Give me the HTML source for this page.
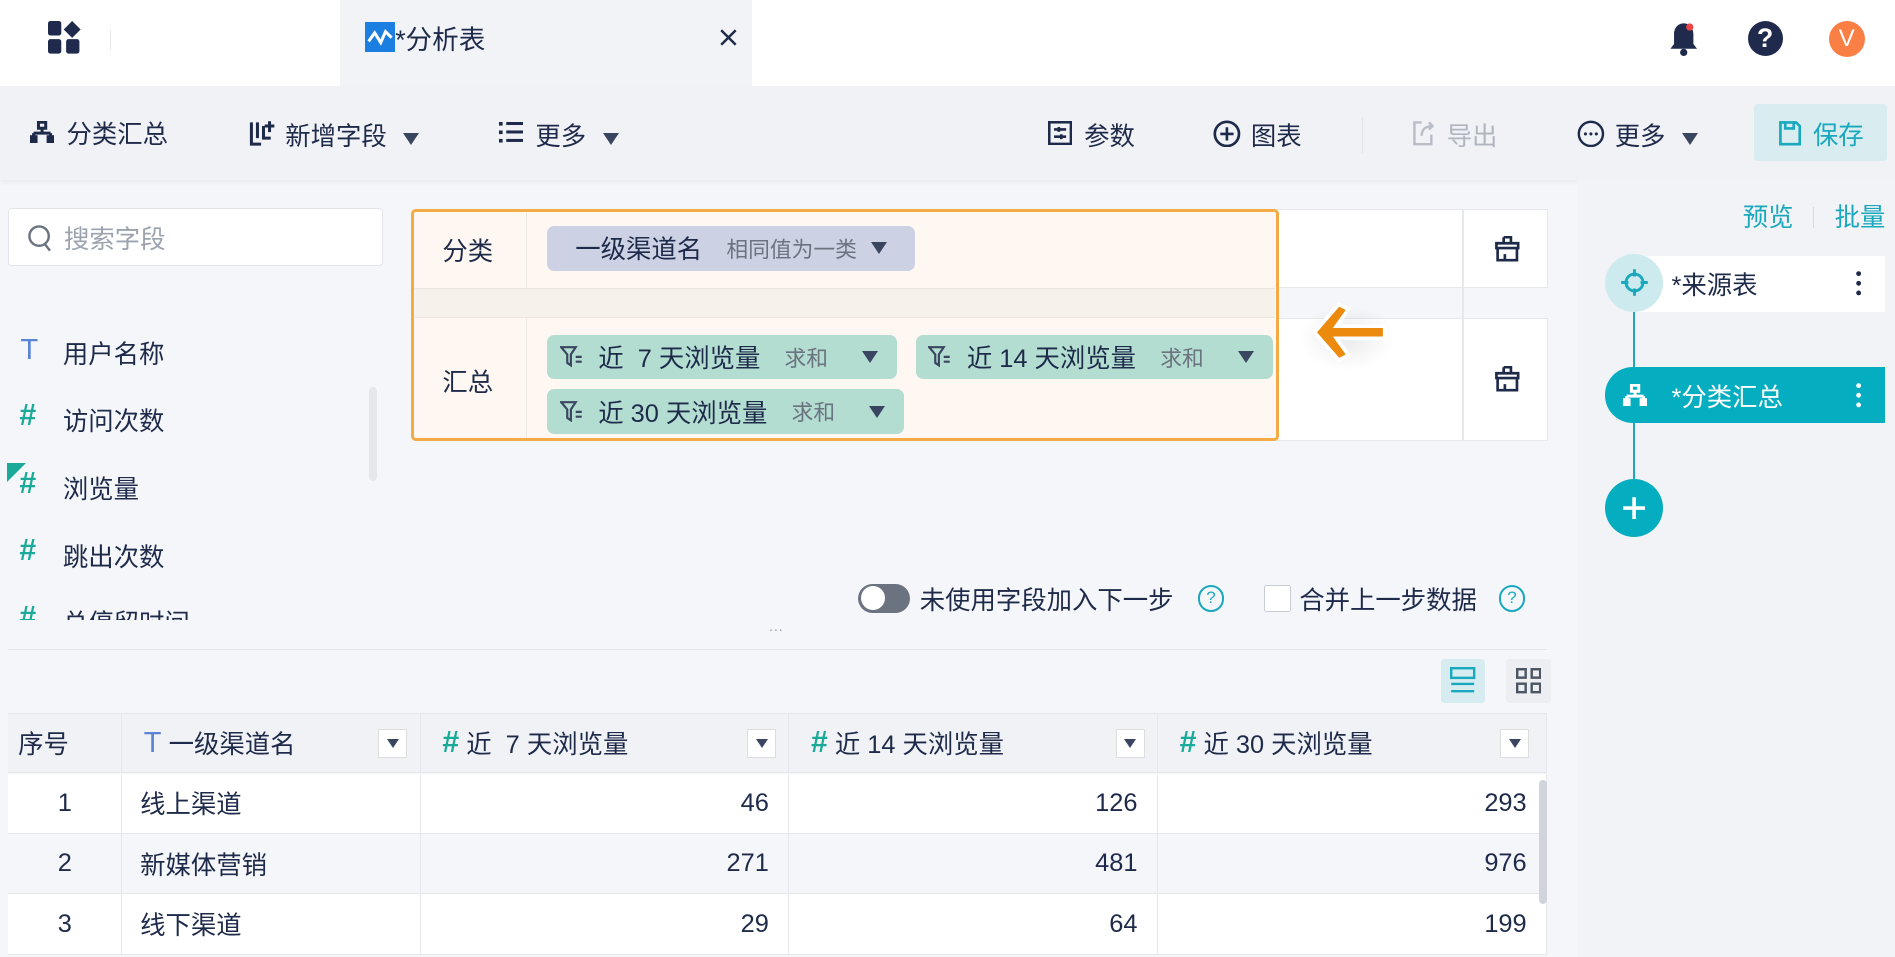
<!DOCTYPE html>
<html><head><meta charset="utf-8"><style>
*{box-sizing:border-box;margin:0;padding:0}
html,body{width:1895px;height:957px;overflow:hidden;background:#f5f6f9}
#r{zoom:1.2086;width:1568px;height:792px;position:relative;font-family:"Liberation Sans","Noto Sans CJK SC",sans-serif;color:#1e2a4a;font-size:21px}
.a{position:absolute}
.t{white-space:nowrap}
.chip{position:absolute;height:37px;border-radius:6px;background:#b2ddd0;display:flex;align-items:center;padding-left:10px;font-size:21px;color:#1e2a4a;white-space:nowrap}
.chip .g{color:#6b7280;font-size:18px;margin-left:20px}
.tri{display:inline-block;width:0;height:0;border-left:7px solid transparent;border-right:7px solid transparent;border-top:10px solid #3a4660}
.row{position:absolute;left:7px;width:1273px;height:50px;border-bottom:1px solid #e5e7eb}
.c{position:absolute;top:0;height:100%;border-right:1px solid #e5e7eb;display:flex;align-items:center}
.h{color:#1aaa9a;font-size:25px;font-weight:bold}
svg{display:block}
</style></head><body><div id="r">
<div class="a" style="left:0;top:0;width:1568px;height:71px;background:#fff"></div>
<svg class="a" style="left:40px;top:17px" width="28" height="28" viewBox="0 0 28 28"><rect x="0" y="0" width="11" height="12" rx="2" fill="#1f2a4d"/><path d="M20 0l7 7-7 7-7-7z" fill="#1f2a4d"/><rect x="0" y="15" width="11" height="12" rx="2" fill="#1f2a4d"/><rect x="15" y="15" width="11" height="12" rx="2" fill="#1f2a4d"/></svg>
<div class="a" style="left:91px;top:25px;width:1px;height:16px;background:#e5e7eb"></div>
<div class="a" style="left:281px;top:0;width:341px;height:71px;background:#f2f3f7"></div>
<svg class="a" style="left:302px;top:18px" width="25" height="25"><rect width="25" height="25" fill="#1a7fe0"/><path d="M3 16l5-7 5 8 4-9 5 5" stroke="#fff" stroke-width="2.5" fill="none"/></svg>
<div class="a t" style="left:327px;top:15px;font-size:22px">*分析表</div>
<svg class="a" style="left:596px;top:24px" width="14" height="14"><path d="M1 1l12 12M13 1L1 13" stroke="#1e2a4a" stroke-width="2"/></svg>
<svg class="a" style="left:1380px;top:17px" width="26" height="30"><path d="M13 2c-5 0-8 4-8 9v8l-3 4h22l-3-4v-8c0-5-3-9-8-9z" fill="#1f2a4d"/><circle cx="13" cy="26" r="3" fill="#1f2a4d"/><circle cx="18" cy="5" r="3" fill="#ef4444"/></svg>
<div class="a" style="left:1446px;top:17px;width:29px;height:29px;border-radius:50%;background:#1f2a4d;color:#fff;font-weight:bold;text-align:center;line-height:29px;font-size:22px">?</div>
<div class="a" style="left:1513px;top:17px;width:30px;height:30px;border-radius:50%;background:#fa7f45;color:#fff;text-align:center;line-height:30px;font-size:20px">V</div>
<!-- toolbar -->
<div class="a" style="left:0;top:71px;width:1568px;height:78px;background:#f1f2f6;box-shadow:0 2px 4px rgba(0,0,0,.05)"></div>
<svg class="a" style="left:25px;top:100px" width="20" height="18" viewBox="0 0 20 18" fill="none" stroke="#1e2a4a" stroke-width="2.5"><rect x="7" y="1" width="6" height="5"/><path d="M10 6v4M3 10h14M3 10v7M17 10v7"/><rect x="1" y="13" width="4" height="4"/><rect x="15" y="13" width="4" height="4"/></svg>
<div class="a t" style="left:55px;top:95px">分类汇总</div>
<svg class="a" style="left:206px;top:99px" width="22" height="22" viewBox="0 0 22 22" fill="none" stroke="#1e2a4a" stroke-width="2.5"><path d="M2 2v18h8M7 2v13M12 5v10h6M17 1v9M13 5h8"/></svg>
<div class="a t" style="left:236px;top:97px">新增字段 <span class="tri" style="margin-left:8px"></span></div>
<svg class="a" style="left:413px;top:101px" width="20" height="18" viewBox="0 0 20 18" fill="#1e2a4a"><rect x="0" y="0" width="3" height="3"/><rect x="6" y="0" width="14" height="2.5"/><rect x="0" y="7" width="3" height="3"/><rect x="6" y="7" width="14" height="2.5"/><rect x="0" y="14" width="3" height="3"/><rect x="6" y="14" width="14" height="2.5"/></svg>
<div class="a t" style="left:443px;top:97px">更多 <span class="tri" style="margin-left:8px"></span></div>
<svg class="a" style="left:867px;top:100px" width="20" height="20" viewBox="0 0 20 20" fill="none" stroke="#1e2a4a" stroke-width="2.2"><rect x="1" y="1" width="18" height="18"/><path d="M5 7h10M5 13h10"/><path d="M9 5v4M11 11v4"/></svg>
<div class="a t" style="left:897px;top:97px">参数</div>
<svg class="a" style="left:1004px;top:99px" width="23" height="23" viewBox="0 0 23 23" fill="none" stroke="#1e2a4a" stroke-width="2.2"><circle cx="11.5" cy="11.5" r="10"/><path d="M11.5 6v11M6 11.5h11"/></svg>
<div class="a t" style="left:1035px;top:97px">图表</div>
<div class="a" style="left:1127px;top:97px;width:1px;height:30px;background:#e0e2e8"></div>
<svg class="a" style="left:1168px;top:99px" width="20" height="22" viewBox="0 0 20 22" fill="none" stroke="#b8bdc7" stroke-width="2"><path d="M8 2H2v18h14v-8"/><path d="M8 13c0-5 3-8 9-8M14 2l3 3-3 3"/></svg>
<div class="a t" style="left:1197px;top:97px;color:#b0b5c0">导出</div>
<svg class="a" style="left:1305px;top:99px" width="23" height="23" viewBox="0 0 23 23"><circle cx="11.5" cy="11.5" r="10" fill="none" stroke="#1e2a4a" stroke-width="2"/><circle cx="7" cy="11.5" r="1.3" fill="#1e2a4a"/><circle cx="11.5" cy="11.5" r="1.3" fill="#1e2a4a"/><circle cx="16" cy="11.5" r="1.3" fill="#1e2a4a"/></svg>
<div class="a t" style="left:1336px;top:97px">更多 <span class="tri" style="margin-left:8px"></span></div>
<div class="a" style="left:1451px;top:86px;width:110px;height:47px;background:#d9ecf0;border-radius:3px"></div>
<svg class="a" style="left:1471px;top:99px" width="20" height="22" viewBox="0 0 20 22" fill="none" stroke="#19a8be" stroke-width="2.2"><path d="M2 2h13l3 3v15H2z"/><path d="M6 2v5h7V2"/></svg>
<div class="a t" style="left:1500px;top:96px;color:#19a8be">保存</div>
<!-- left panel -->
<div class="a" style="left:7px;top:172px;width:310px;height:48px;background:#fff;border:1px solid #e3e5ea;border-radius:3px"></div>
<svg class="a" style="left:22px;top:185px" width="22" height="24" viewBox="0 0 22 24" fill="none" stroke="#6b7280" stroke-width="2"><circle cx="10" cy="10" r="8"/><path d="M15 17l4 5"/></svg>
<div class="a t" style="left:53px;top:182px;color:#9ca3af">搜索字段</div>
<div class="a t" style="left:17px;top:276px;color:#5a84d6;font-size:24px">T</div><div class="a t" style="left:52px;top:277px">用户名称</div>
<div class="a t h" style="left:16px;top:330px">#</div><div class="a t" style="left:52px;top:333px">访问次数</div>
<div class="a" style="left:6px;top:383px;width:0;height:0;border-top:16px solid #1aaa9a;border-right:16px solid transparent"></div>
<div class="a t h" style="left:16px;top:386px">#</div><div class="a t" style="left:52px;top:389px">浏览量</div>
<div class="a t h" style="left:16px;top:442px">#</div><div class="a t" style="left:52px;top:445px">跳出次数</div>
<div class="a" style="left:0;top:497px;width:320px;height:16px;overflow:hidden"><div class="a t h" style="left:16px;top:0">#</div><div class="a t" style="left:52px;top:3px">总停留时间</div></div>
<div class="a" style="left:305px;top:320px;width:7px;height:78px;background:#e5e7eb;border-radius:4px"></div>
<!-- config -->
<div class="a" style="left:343px;top:173px;width:938px;height:65px;background:#fff;border:1px solid #e6e8ec"></div>
<div class="a" style="left:343px;top:263px;width:938px;height:102px;background:#fff;border:1px solid #e6e8ec"></div>
<div class="a" style="left:1210px;top:173px;width:1px;height:192px;background:#e6e8ec"></div>
<svg class="a" style="left:1236px;top:195px" width="22" height="22" viewBox="0 0 22 22" fill="none" stroke="#1e2a4a" stroke-width="2.2"><path d="M8 1h6v5M8 1v5M2 6h18v4H2zM3 10v10h16V10M9 20v-5"/></svg>
<svg class="a" style="left:1236px;top:303px" width="22" height="22" viewBox="0 0 22 22" fill="none" stroke="#1e2a4a" stroke-width="2.2"><path d="M8 1h6v5M8 1v5M2 6h18v4H2zM3 10v10h16V10M9 20v-5"/></svg>
<div class="a" style="left:340px;top:173px;width:718px;height:192px;background:#fff8f2;border:3px solid #f4ab45;border-radius:4px"></div>
<div class="a" style="left:343px;top:238px;width:712px;height:25px;background:#f6f1eb;border-top:1px solid #ebe5de;border-bottom:1px solid #ebe5de"></div>
<div class="a" style="left:435px;top:176px;width:1px;height:62px;background:#eee5dc"></div>
<div class="a" style="left:435px;top:263px;width:1px;height:99px;background:#eee5dc"></div>
<div class="a t" style="left:366px;top:192px">分类</div>
<div class="a t" style="left:366px;top:300px">汇总</div>
<div class="chip" style="left:453px;top:187px;width:304px;background:#ccd1e3;padding-left:23px">一级渠道名<span class="g" style="margin-left:20px">相同值为一类</span><span class="tri" style="margin-left:12px"></span></div>
<div class="chip" style="left:453px;top:277px;width:289px"><svg width="20" height="18" viewBox="0 0 20 18" fill="none" stroke="#3a4660" stroke-width="1.8"><path d="M1 1h12l-4 6v9l-3-2V7z"/><path d="M13 9h5M13 13h5"/></svg><span style="margin-left:12px">近&nbsp; 7 天浏览量</span><span class="g">求和</span><span class="tri" style="margin-left:28px"></span></div>
<div class="chip" style="left:758px;top:277px;width:295px"><svg width="20" height="18" viewBox="0 0 20 18" fill="none" stroke="#3a4660" stroke-width="1.8"><path d="M1 1h12l-4 6v9l-3-2V7z"/><path d="M13 9h5M13 13h5"/></svg><span style="margin-left:12px">近 14 天浏览量</span><span class="g">求和</span><span class="tri" style="margin-left:28px"></span></div>
<div class="chip" style="left:453px;top:322px;width:295px"><svg width="20" height="18" viewBox="0 0 20 18" fill="none" stroke="#3a4660" stroke-width="1.8"><path d="M1 1h12l-4 6v9l-3-2V7z"/><path d="M13 9h5M13 13h5"/></svg><span style="margin-left:12px">近 30 天浏览量</span><span class="g">求和</span><span class="tri" style="margin-left:28px"></span></div>
<div class="a" style="left:1075px;top:252px;width:80px;height:55px;background:radial-gradient(ellipse,rgba(0,0,0,.08),rgba(0,0,0,0) 70%)"></div>
<svg class="a" style="left:1066px;top:245px" width="90" height="60"><path d="M80 25H40l10-14-8-4-20 23 20 23 8-4-10-14h40z" fill="#eb8a0c" stroke="#fff" stroke-width="3"/></svg>
<!-- options -->
<div class="a" style="left:710px;top:483px;width:43px;height:24px;border-radius:12px;background:#6b7280"></div>
<div class="a" style="left:712px;top:485px;width:20px;height:20px;border-radius:50%;background:#fff"></div>
<div class="a t" style="left:761px;top:481px">未使用字段加入下一步</div>
<div class="a" style="left:991px;top:484px;width:22px;height:22px;border:2px solid #19a8be;border-radius:50%;color:#19a8be;font-size:14px;text-align:center;line-height:18px">?</div>
<div class="a" style="left:1046px;top:484px;width:22px;height:22px;border:1px solid #c8ccd4;background:#fff;border-radius:2px"></div>
<div class="a t" style="left:1075px;top:481px">合并上一步数据</div>
<div class="a" style="left:1240px;top:484px;width:22px;height:22px;border:2px solid #19a8be;border-radius:50%;color:#19a8be;font-size:14px;text-align:center;line-height:18px">?</div>
<div class="a" style="left:636px;top:515px;font-size:12px;color:#9ca3af">···</div>
<div class="a" style="left:7px;top:537px;width:1273px;height:1px;background:#e3e5ea"></div>
<div class="a" style="left:1192px;top:545px;width:37px;height:37px;background:#d6ecf0;border-radius:3px"></div>
<svg class="a" style="left:1200px;top:552px" width="21" height="22" viewBox="0 0 21 22" fill="none" stroke="#19a8be" stroke-width="2"><rect x="1" y="1" width="19" height="8"/><path d="M1 14h19M1 20h19"/></svg>
<div class="a" style="left:1246px;top:545px;width:37px;height:37px;background:#eceef2;border-radius:3px"></div>
<svg class="a" style="left:1254px;top:553px" width="21" height="21" viewBox="0 0 21 21" fill="none" stroke="#4b5563" stroke-width="2"><rect x="1" y="1" width="7" height="7"/><rect x="13" y="1" width="7" height="7"/><rect x="1" y="13" width="7" height="7"/><rect x="13" y="13" width="7" height="7"/></svg>
<!-- table -->
<div class="row" style="top:590px;height:50px;background:#f1f2f5;border-top:1px solid #e5e7eb">
<div class="c" style="left:0;width:94px;padding-left:8px">序号</div>
<div class="c" style="left:94px;width:247px;padding-left:18px"><span style="color:#5a84d6;font-size:24px">T</span>&nbsp;一级渠道名<span style="position:absolute;right:10px;width:24px;height:24px;background:#fff;border:1px solid #ddd;display:flex;align-items:center;justify-content:center"><span class="tri" style="border-width:8px 5px 0"></span></span></div>
<div class="c" style="left:341px;width:305px;padding-left:18px"><span class="h">#</span>&nbsp;近&nbsp; 7 天浏览量<span style="position:absolute;right:10px;width:24px;height:24px;background:#fff;border:1px solid #ddd;display:flex;align-items:center;justify-content:center"><span class="tri" style="border-width:8px 5px 0"></span></span></div>
<div class="c" style="left:646px;width:305px;padding-left:18px"><span class="h">#</span>&nbsp;近 14 天浏览量<span style="position:absolute;right:10px;width:24px;height:24px;background:#fff;border:1px solid #ddd;display:flex;align-items:center;justify-content:center"><span class="tri" style="border-width:8px 5px 0"></span></span></div>
<div class="c" style="left:951px;width:322px;padding-left:18px"><span class="h">#</span>&nbsp;近 30 天浏览量<span style="position:absolute;right:14px;width:24px;height:24px;background:#fff;border:1px solid #ddd;display:flex;align-items:center;justify-content:center"><span class="tri" style="border-width:8px 5px 0"></span></span></div>
</div>
<div class="row" style="top:640px;background:#fff"><div class="c" style="left:0;width:94px;justify-content:center">1</div><div class="c" style="left:94px;width:247px;padding-left:15px">线上渠道</div><div class="c" style="left:341px;width:305px;justify-content:flex-end;padding-right:16px">46</div><div class="c" style="left:646px;width:305px;justify-content:flex-end;padding-right:16px">126</div><div class="c" style="left:951px;width:322px;justify-content:flex-end;padding-right:16px">293</div></div>
<div class="row" style="top:690px;background:#f5f6f9"><div class="c" style="left:0;width:94px;justify-content:center">2</div><div class="c" style="left:94px;width:247px;padding-left:15px">新媒体营销</div><div class="c" style="left:341px;width:305px;justify-content:flex-end;padding-right:16px">271</div><div class="c" style="left:646px;width:305px;justify-content:flex-end;padding-right:16px">481</div><div class="c" style="left:951px;width:322px;justify-content:flex-end;padding-right:16px">976</div></div>
<div class="row" style="top:740px;background:#fff"><div class="c" style="left:0;width:94px;justify-content:center">3</div><div class="c" style="left:94px;width:247px;padding-left:15px">线下渠道</div><div class="c" style="left:341px;width:305px;justify-content:flex-end;padding-right:16px">29</div><div class="c" style="left:646px;width:305px;justify-content:flex-end;padding-right:16px">64</div><div class="c" style="left:951px;width:322px;justify-content:flex-end;padding-right:16px">199</div></div>
<div class="a" style="left:1273px;top:645px;width:7px;height:103px;background:#d1d5db;border-radius:4px"></div>
<!-- right panel -->
<div class="a" style="left:1305px;top:149px;width:263px;height:643px;background:#f2f3f6"></div>
<div class="a t" style="left:1442px;top:164px;color:#19a8be">预览</div>
<div class="a" style="left:1500px;top:171px;width:1px;height:18px;background:#d6d9de"></div>
<div class="a t" style="left:1518px;top:164px;color:#19a8be">批量</div>
<div class="a" style="left:1351px;top:240px;width:2px;height:180px;background:#19a8be"></div>
<div class="a" style="left:1352px;top:212px;width:208px;height:46px;background:#fff"></div>
<div class="a" style="left:1328px;top:210px;width:48px;height:48px;border-radius:50%;background:#cdebef"></div>
<svg class="a" style="left:1340px;top:222px" width="24" height="24" viewBox="0 0 24 24" fill="none" stroke="#19a8be" stroke-width="2.4"><circle cx="12" cy="12" r="7"/><path d="M12 1v6M12 17v6M1 12h6M17 12h6"/></svg>
<div class="a t" style="left:1383px;top:220px">*来源表</div>
<svg class="a" style="left:1535px;top:223px" width="6" height="22"><circle cx="3" cy="3" r="2" fill="#1e2a4a"/><circle cx="3" cy="11" r="2" fill="#1e2a4a"/><circle cx="3" cy="19" r="2" fill="#1e2a4a"/></svg>
<div class="a" style="left:1328px;top:304px;width:232px;height:46px;background:#04adbf;border-radius:23px 0 0 23px"></div>
<svg class="a" style="left:1343px;top:318px" width="20" height="18" viewBox="0 0 20 18" fill="none" stroke="#fff" stroke-width="2.5"><rect x="7" y="1" width="6" height="5"/><path d="M10 6v4M3 10h14M3 10v7M17 10v7"/><rect x="1" y="13" width="4" height="4"/><rect x="15" y="13" width="4" height="4"/></svg>
<div class="a t" style="left:1383px;top:313px;color:#fff">*分类汇总</div>
<svg class="a" style="left:1535px;top:316px" width="6" height="22"><circle cx="3" cy="3" r="2" fill="#fff"/><circle cx="3" cy="11" r="2" fill="#fff"/><circle cx="3" cy="19" r="2" fill="#fff"/></svg>
<div class="a" style="left:1328px;top:396px;width:48px;height:48px;border-radius:50%;background:#04adbf"></div>
<svg class="a" style="left:1342px;top:410px" width="20" height="20"><path d="M10 1v18M1 10h18" stroke="#fff" stroke-width="3"/></svg>
</div></body></html>
